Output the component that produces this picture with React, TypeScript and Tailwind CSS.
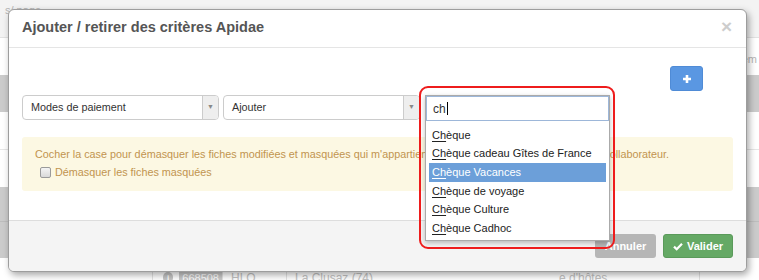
import React from 'react';

const matches = [
  'Chèque',
  'Chèque cadeau Gîtes de France',
  'Chèque Vacances',
  'Chèque de voyage',
  'Chèque Culture',
  'Chèque Cadhoc',
];

const Select = ({ label }: { label: string }) => (
  <div className="flex h-[25px] w-[197px] items-stretch overflow-hidden rounded-[4px] border border-[#ccc] bg-white">
    <span className="flex-1 truncate pl-[8px] leading-[23px] text-[#333]">{label}</span>
    <span className="flex w-[16px] items-center justify-center border-l border-[#ccc] bg-[#eee] text-[7px] text-[#888]">▼</span>
  </div>
);

// page behind the modal, only the edges show
const Background = () => (
  <div className="flex h-full flex-col text-[11px] text-[#b5b5b5]">
    <div className="flex h-[38px] border-b border-[#e2e2e2] bg-[#f3f3f3]">
      <span className="pl-[5px] pt-[3px] leading-[14px]">s/ page</span>
    </div>
    <div className="flex h-[37px] justify-end bg-white pr-[2px] pt-[13px]">em</div>
    <div className="h-[37px] bg-[#cbcbcb]" />
    <div className="h-[38px] border-b border-[#e6e6e6] bg-white" />
    <div className="h-[37px] bg-white" />
    <div className="h-[35px] border-b border-[#bdbdbd] bg-[#cbcbcb]" />
    <div className="h-[36px] bg-[#cbcbcb]" />
    <div className="flex h-[22px] items-start bg-white pt-[13px] text-[12px] leading-[14px] text-[#c2c2c2]">
      <span className="ml-[152px] flex h-[20px] w-[71px] items-start border-l border-r border-[#e3e3e3] pl-[10px]">
        <span className="mr-[6px] mt-[1px] flex h-[11px] w-[11px] items-center justify-center rounded-full bg-[#c4c4c4] text-[8px] font-bold text-white">i</span>
        <span className="bg-[#c9c9c9] px-[3px] text-[11px] text-white">668508</span>
      </span>
      <span className="w-[64px] border-r border-[#e3e3e3] pl-[8px]">HLO</span>
      <span className="w-[272px] pl-[8px]">La Clusaz (74)</span>
      <span className="w-[141px] border-r border-[#e3e3e3]">e d'hôtes</span>
    </div>
  </div>
);

export default function App() {
  return (
    <div className="relative h-[280px] w-[759px] overflow-hidden bg-white font-['Liberation_Sans',Arial,sans-serif] text-[10.8px]">
      <Background />

      {/* modal */}
      <div className="absolute left-[8px] top-[9px] flex h-[263px] w-[739px] flex-col overflow-hidden rounded-[6px] border border-[#9d9d9d] bg-white shadow-[2px_3px_7px_rgba(0,0,0,0.35)]">
        <div className="flex h-[38px] shrink-0 items-start justify-between border-b border-[#e5e5e5] pl-[13px] pr-[14px] pt-[8px]">
          <h4 className="text-[14.5px] font-bold leading-[18px] text-[#555]">Ajouter / retirer des critères Apidae</h4>
          <span className="text-[19px] font-bold leading-[18px] text-[#cdcdcd]">×</span>
        </div>

        <div className="flex h-[172px] shrink-0 flex-col px-[13px] pt-[18px]">
          <div className="flex justify-end pr-[30px]">
            <button className="flex h-[25px] w-[33px] items-center justify-center rounded-[3px] border border-[#4f8bd6] bg-[#5a97e2]">
              <svg width="10" height="10" viewBox="0 0 10 10">
                <path d="M5 1v8M1 5h8" stroke="white" strokeWidth="2.6" />
              </svg>
            </button>
          </div>
          <div className="mt-[4px] flex gap-[4px]">
            <Select label="Modes de paiement" />
            <Select label="Ajouter" />
          </div>
          <div className="mt-[17px] h-[54px] rounded-[3px] bg-[#fcf8e3] pl-[13px] pt-[8px] leading-[18px] text-[#c1944f]">
            <p>
              Cocher la case pour démasquer les fiches modifiées et masquées qui m'appartiennent ou qui appartiennent à un
              autre collaborateur.
            </p>
            <label className="flex items-center pl-[5px]">
              <span className="mr-[4px] h-[11px] w-[11px] rounded-[2px] border border-[#9a9a9a] bg-gradient-to-b from-[#f4f4f4] to-[#d9d9d9]" />
              Démasquer les fiches masquées
            </label>
          </div>
        </div>

        <div className="flex flex-1 justify-end gap-[7px] border-t border-[#ddd] bg-[#f4f4f4] pr-[13px] pt-[13px]">
          <button className="h-[24px] w-[61px] rounded-[3px] bg-[#b6b6b6] text-[11px] font-bold text-white">Annuler</button>
          <button className="flex h-[24px] w-[70px] items-center justify-center gap-[4px] rounded-[3px] border border-[#5a9a5a] bg-[#65a965] text-[11px] font-bold text-white">
            <svg width="10" height="9" viewBox="0 0 10 9">
              <path d="M1 4.6l2.7 2.7L9 1.8" fill="none" stroke="white" strokeWidth="2.2" />
            </svg>
            Valider
          </button>
        </div>
      </div>

      {/* open select2 dropdown */}
      <div className="absolute left-[425px] top-[95px] h-[146px] w-[185px] border border-[#aaa] bg-white shadow-[0_2px_5px_rgba(0,0,0,0.25)]">
        <div className="flex h-[25px] items-center border border-[#9db7d9] pl-[6px] text-[12px] text-[#333]">
          ch<span className="ml-[1px] h-[13px] w-px bg-black" />
        </div>
        <ul className="px-[3px] pt-[4.5px] text-[11px] text-[#222]">
          {matches.map((m, i) => (
            <li
              key={m}
              className={`h-[18.7px] pl-[3px] leading-[18.7px] ${i === 2 ? 'bg-[#6c9fd9] text-white' : ''}`}
            >
              <span className="underline underline-offset-[2px]">Ch</span>
              {m.slice(2)}
            </li>
          ))}
        </ul>
      </div>

      {/* red highlight drawn over the screenshot */}
      <div className="absolute left-[419px] top-[86px] h-[163px] w-[196px] rounded-[9px] border-2 border-[#ee1c1c]" />
    </div>
  );
}
